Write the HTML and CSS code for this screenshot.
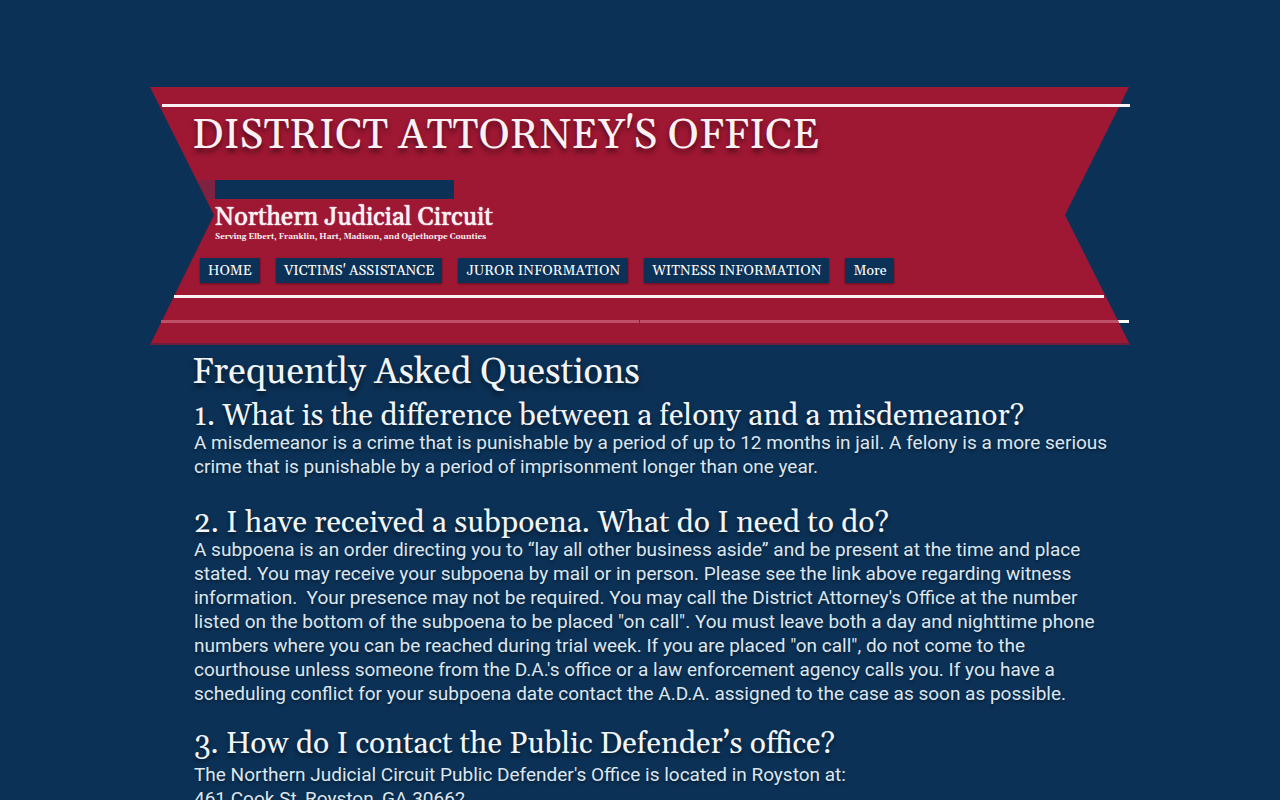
FILE: index.html
```
<!DOCTYPE html>
<html lang="en">
<head>
	<meta charset="utf-8">
	<meta name="viewport" content="width=device-width, initial-scale=1">
	<title>District Attorney's Office - FAQ</title>
	<link rel="stylesheet" href="styles.css">
</head>
<body>

<div class="page">
	<header class="banner">
		<svg class="ribbon" viewBox="0 0 980 260" preserveAspectRatio="none" aria-hidden="true">
			<rect x="11" y="233" width="968" height="3" fill="#fff"/>
			<polygon points="0,0 979,0 915,128 980,258 0,258 64,128" fill="#9e1733"/>
			<polygon points="1,256 979,256 980,258 0,258" fill="#6c1f3d"/>
			<polygon points="47,93 65,93 65,112 56,112" fill="#7d2240"/>
			<path d="M11 233H489V236H11zM490 233H968L969 236H490z" fill="#bd5066"/>
			<rect x="12" y="17" width="968" height="3" fill="#fbf0f3"/>
			<rect x="24" y="208" width="930" height="3" fill="#fbf0f3"/>
		</svg>
		<div class="banner-content">
			<h1>DISTRICT ATTORNEY'S OFFICE</h1>
			<div class="circuit">
				<div class="bar"></div>
				<p class="circuit-name">Northern Judicial Circuit</p>
				<p class="counties">Serving Elbert, Franklin, Hart, Madison, and Oglethorpe Counties</p>
			</div>
			<nav class="menu">
				<a href="#">HOME</a>
				<a href="#">VICTIMS' ASSISTANCE</a>
				<a href="#">JUROR INFORMATION</a>
				<a href="#">WITNESS INFORMATION</a>
				<a href="#">More</a>
			</nav>
		</div>
	</header>

	<main class="faq">
		<h2>Frequently Asked Questions</h2>

		<section>
			<h3>1. What is the difference between a felony and a misdemeanor?</h3>
			<p>A misdemeanor is a crime that is punishable by a period of up to 12 months in jail. A felony is a more serious<br>
			crime that is punishable by a period of imprisonment longer than one year.</p>
		</section>

		<section>
			<h3>2. I have received a subpoena. What do I need to do?</h3>
			<p>A subpoena is an order directing you to “lay all other business aside” and be present at the time and place<br>
			stated. You may receive your subpoena by mail or in person. Please see the link above regarding witness<br>
			information.&nbsp; Your presence may not be required. You may call the District Attorney's Office at the number<br>
			listed on the bottom of the subpoena to be placed "on call". You must leave both a day and nighttime phone<br>
			numbers where you can be reached during trial week. If you are placed "on call", do not come to the<br>
			courthouse unless someone from the D.A.'s office or a law enforcement agency calls you. If you have a<br>
			scheduling conflict for your subpoena date contact the A.D.A. assigned to the case as soon as possible.</p>
		</section>

		<section class="contact">
			<h3>3. How do I contact the Public Defender’s office?</h3>
			<p>The Northern Judicial Circuit Public Defender's Office is located in Royston at:<br>
			461 Cook St, Royston, GA 30662</p>
		</section>
	</main>
</div>

</body>
</html>
```
FILE: styles.css
```
* {
	box-sizing: border-box;
	margin: 0;
	padding: 0;
}
body {
	background-color: #0b3156;
	color: #f2f5f8;
	font-family: Georgia, Gelasio, 'Liberation Serif', serif;
}
.page {
	max-width: 980px;
	margin: 0 auto;
	padding-top: 87px;
}
/* ribbon and banner text share one grid cell */
.banner {
	display: grid;
}
.ribbon,
.banner-content {
	grid-area: 1 / 1;
}
.ribbon {
	width: 100%;
	height: 260px;
}
.banner-content {
	padding: 22px 42px 0;
}
h1 {
	font-size: 42px;
	font-weight: 400;
	line-height: 54px;
	color: #fbf0f3;
	text-shadow: 0 4px 5px rgba(0, 0, 0, 0.5);
}
.circuit {
	padding: 17px 23px 0;
	color: #fbf0f3;
}
.bar {
	width: 239px;
	height: 19px;
	background-color: #0b3156;
}
.circuit-name {
	margin-top: 6px;
	font-size: 25px;
	line-height: 26px;
	text-shadow: 0 0 1px #fbf0f3, 0 0 1px #fbf0f3;
}
.counties {
	font-size: 8px;
	font-weight: 700;
	line-height: 12px;
}
.menu {
	display: flex;
	flex-wrap: wrap;
	gap: 16px;
	padding: 15px 8px 0;
}
.menu a {
	padding: 1px 8px 0;
	font-size: 14px;
	line-height: 24px;
	color: #fff;
	text-decoration: none;
	background-color: #0b3156;
	box-shadow: 0 1px 2px rgba(0, 0, 0, 0.4);
}
.faq {
	padding: 0 20px 40px 42px;
}
h2 {
	font-size: 36px;
	font-weight: 400;
	line-height: 52px;
	text-shadow: 0 4px 5px rgba(0, 0, 0, 0.5);
}
h3 {
	padding-top: 2px;
	font-size: 30px;
	font-weight: 400;
	line-height: 30px;
	text-shadow: 0 3px 4px rgba(0, 0, 0, 0.5);
}
section {
	padding-left: 2px;
}
section + section {
	margin-top: 27px;
}
section p {
	font-family: Roboto, sans-serif;
	font-size: 19px;
	font-weight: 400;
	line-height: 24px;
	color: #dde6ef;
	text-shadow: 0 2px 3px rgba(0, 0, 0, 0.4);
}
section.contact {
	margin-top: 21px;
}
.contact h3 {
	margin-bottom: 4px;
}
```
